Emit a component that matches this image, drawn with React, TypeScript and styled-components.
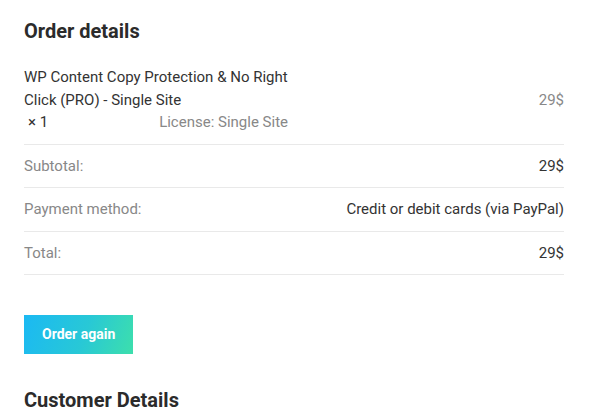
import React from "react";
import styled, { createGlobalStyle } from "styled-components";

const Global = createGlobalStyle`
  html, body { margin: 0; padding: 0; background: #fff; }
  body { font-family: Roboto, "Liberation Sans", sans-serif; color: #333; }
`;

const Page = styled.div`
  width: 540px;
  padding: 19px 31px 0 24px;
`;

const Heading = styled.h2`
  margin: 0;
  font-size: 20px;
  line-height: 24px;
  font-weight: 700;
  color: #2b2b2b;
`;

const Table = styled.div`
  margin-top: 12px;
  display: flex;
  flex-direction: column;
`;

const Row = styled.div<{ $first?: boolean }>`
  display: grid;
  grid-template-columns: 264px 1fr;
  align-items: center;
  padding: ${(p) => (p.$first ? "11px 0 10px" : "11px 0")};
  border-bottom: 1px solid #e9e9e9;
  font-size: 15px;
  line-height: 20.5px;
`;

const Label = styled.div`
  color: #888;
`;

const Value = styled.div<{ $muted?: boolean }>`
  text-align: right;
  color: ${(p) => (p.$muted ? "#888" : "#333")};
`;

const Product = styled.div`
  line-height: 22.5px;
  color: #333;
`;

const Meta = styled.div`
  display: flex;
  justify-content: space-between;
`;

const Qty = styled.span`
  padding-left: 4px;
`;

const License = styled.span`
  color: #888;
`;

const Button = styled.button`
  margin-top: 40px;
  display: inline-block;
  border: 0;
  border-radius: 0;
  padding: 10px 18px;
  font-family: Roboto, "Liberation Sans", sans-serif;
  font-size: 14px;
  line-height: 19px;
  font-weight: 700;
  color: #fff;
  background: linear-gradient(110deg, #1bb9f3 0%, #28c8d6 55%, #3ddfac 100%);
  cursor: pointer;
`;

const Section = styled.div`
  margin-top: 34px;
`;

export default function App() {
  return (
    <Page>
      <Global />
      <Heading>Order details</Heading>
      <Table>
        <Row $first>
          <Product>
            WP Content Copy Protection &amp; No Right Click (PRO) - Single Site
            <Meta>
              <Qty>× 1</Qty>
              <License>License: Single Site</License>
            </Meta>
          </Product>
          <Value $muted>29$</Value>
        </Row>
        <Row>
          <Label>Subtotal:</Label>
          <Value>29$</Value>
        </Row>
        <Row>
          <Label>Payment method:</Label>
          <Value>Credit or debit cards (via PayPal)</Value>
        </Row>
        <Row>
          <Label>Total:</Label>
          <Value>29$</Value>
        </Row>
      </Table>
      <Button>Order again</Button>
      <Section>
        <Heading>Customer Details</Heading>
      </Section>
    </Page>
  );
}
